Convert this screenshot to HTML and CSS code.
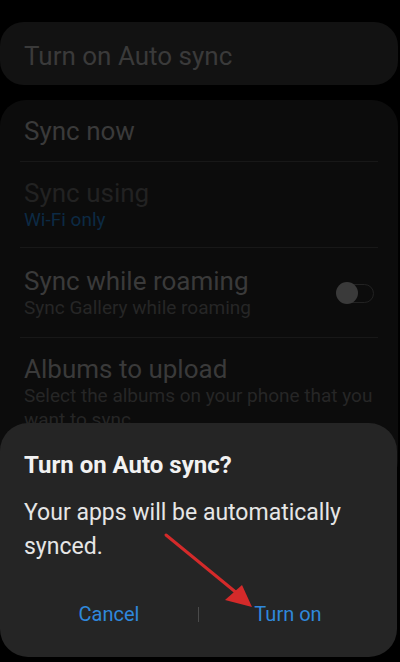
FILE: index.html
```html
<!DOCTYPE html>
<html>
<head>
<meta charset="utf-8">
<link rel="stylesheet" href="styles.css">
</head>
<body>
<div class="screen">
  <div class="card master">
    <span class="master-label">Turn on Auto sync</span>
  </div>
  <div class="card list">
    <div class="row">
      <div class="row-title">Sync now</div>
    </div>
    <div class="row">
      <div class="row-title disabled">Sync using</div>
      <div class="row-sub accent">Wi-Fi only</div>
    </div>
    <div class="row with-switch">
      <div class="row-text">
        <div class="row-title">Sync while roaming</div>
        <div class="row-sub">Sync Gallery while roaming</div>
      </div>
      <div class="switch"><span class="knob"></span></div>
    </div>
    <div class="row">
      <div class="row-title">Albums to upload</div>
      <div class="row-sub">Select the albums on your phone that you want to sync.</div>
    </div>
  </div>
  <div class="empty-note">No synced data in OneDrive</div>

  <div class="dialog">
    <div class="dialog-title">Turn on Auto sync?</div>
    <div class="dialog-body">Your apps will be automatically synced.</div>
    <div class="dialog-actions">
      <button class="action">Cancel</button>
      <span class="action-sep"></span>
      <button class="action">Turn on</button>
    </div>
  </div>

  <svg class="pointer" width="400" height="662" viewBox="0 0 400 662">
    <line x1="166" y1="535" x2="238" y2="594" stroke="#d42a2a" stroke-width="3" stroke-linecap="round"/>
    <polygon points="252,607 225,600 242,585" fill="#d42a2a"/>
  </svg>
</div>
</body>
</html>
```
FILE: styles.css
```css
* { box-sizing: border-box; }
html, body {
  margin: 0;
  padding: 0;
  background: #000;
  height: 662px;
  overflow: hidden;
}
body {
  font-family: Roboto, "Noto Sans", sans-serif;
}
.screen {
  position: relative;
  width: 400px;
  height: 662px;
  overflow: hidden;
  padding: 22px 2px 0 0;
}
.card {
  background: #0c0c0c;
}
.master {
  background: #121212;
  height: 63px;
  border-radius: 24px;
  display: flex;
  align-items: center;
  padding: 4px 24px 0;
}
.master-label {
  font-size: 26px;
  color: #3a3a3a;
}
.list {
  margin-top: 15px;
  border-radius: 26px;
  padding: 0 20px 40px;
}
.row {
  padding: 16px 4px 15px;
  border-bottom: 1px solid #181818;
}
.row:last-child { border-bottom: none; }
.row-title {
  font-size: 26px;
  line-height: 30px;
  color: #3a3a3a;
}
.row-title.disabled { color: #222; }
.row-sub {
  font-size: 19px;
  line-height: 24px;
  color: #262626;
}
.row-sub.accent { color: #0c2a44; }
.with-switch {
  display: flex;
  align-items: center;
  justify-content: space-between;
  padding-top: 18px;
  padding-bottom: 17px;
}
.switch {
  position: relative;
  width: 37px;
  height: 19px;
  border: 1.5px solid #222;
  border-radius: 10px;
  margin-right: 0;
}
.knob {
  position: absolute;
  left: -2px;
  top: -3px;
  width: 22px;
  height: 22px;
  border-radius: 50%;
  background: #3a3a3a;
}
.empty-note {
  margin-top: 196px;
  text-align: center;
  font-size: 20px;
  line-height: 24px;
  color: #2a2a2a;
}
.dialog {
  position: absolute;
  left: 0;
  right: 3px;
  top: 423px;
  height: 234px;
  background: #252525;
  border-radius: 28px;
  padding: 27px 20px 0;
}
.dialog-title {
  font-size: 24px;
  font-weight: 700;
  color: #f2f2f2;
  line-height: 30px;
  padding: 0 4px;
}
.dialog-body {
  margin-top: 16px;
  font-size: 23px;
  line-height: 34px;
  color: #e6e6e6;
  padding: 0 4px;
}
.dialog-actions {
  margin-top: 36px;
  display: flex;
  align-items: center;
}
.action {
  flex: 1;
  background: none;
  border: none;
  font-family: inherit;
  font-size: 20px;
  color: #2f88dc;
  padding: 0;
  line-height: 28px;
}
.action-sep {
  width: 1px;
  height: 15px;
  background: #4a4a4a;
}
.pointer {
  position: absolute;
  left: 0;
  top: 0;
  pointer-events: none;
}
```
